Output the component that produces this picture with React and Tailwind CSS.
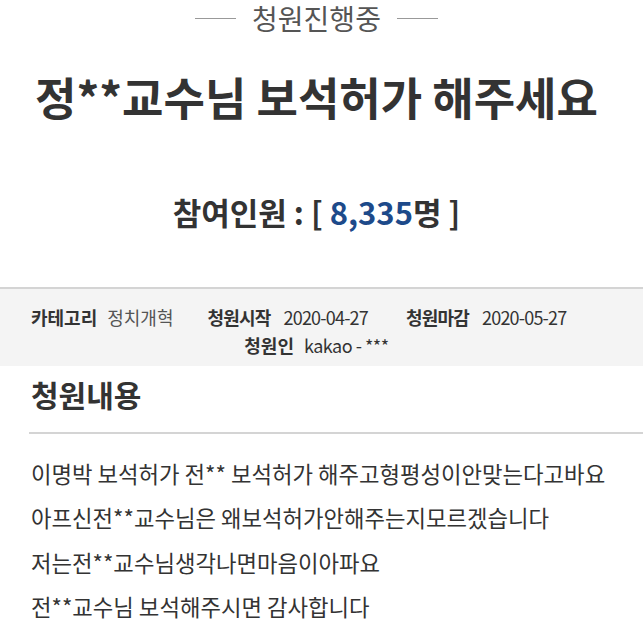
export default function App() {
  const font = { fontFamily: '"Noto Sans CJK KR", "Noto Sans", sans-serif' };
  return (
    <div className="w-[643px] h-[629px] overflow-hidden bg-white text-[#333]" style={font}>
      <div className="w-[633px]">
        <div className="h-[36px] flex items-center justify-center gap-[16px]">
          <span className="block w-[41px] h-px bg-[#999]"></span>
          <span className="text-[28px] leading-[36px] text-[#555]">청원진행중</span>
          <span className="block w-[41px] h-px bg-[#999]"></span>
        </div>
        <h1 className="mt-[34px] text-center text-[45px] leading-[54px] font-bold">
          정**교수님 보석허가 해주세요
        </h1>
        <p className="mt-[68px] text-center text-[31px] leading-[40px] font-bold">
          참여인원 : [ <span className="text-[#1d4a8a]">8,335</span>명 ]
        </p>
      </div>
      <div className="mt-[55px] border-t-2 border-[#d4d4d4] bg-[#f4f4f4] h-[79px] pt-[14px]">
        <div className="w-[633px] text-[18px] leading-[28px]">
          <div className="flex pl-[31px]">
            <span className="mr-[34px]"><b className="mr-[10px]">카테고리</b><span className="text-[#555]">정치개혁</span></span>
            <span className="mr-[38px]"><b className="mr-[13px] tracking-[-0.8px]">청원시작</b><span className="tracking-[-0.8px]">2020-04-27</span></span>
            <span><b className="mr-[13px] tracking-[-0.8px]">청원마감</b><span className="tracking-[-0.8px]">2020-05-27</span></span>
          </div>
          <div className="flex justify-center">
            <span><b className="mr-[10px]">청원인</b><span className="tracking-[-0.5px]">kakao - ***</span></span>
          </div>
        </div>
      </div>
      <div className="pl-[29px]">
        <h2 className="pt-[8px] pl-[2px] text-[30px] leading-[40px] font-bold">청원내용</h2>
        <div className="mt-[18px] h-[2px] bg-[#d4d4d4]"></div>
        <div className="pt-[17px] pl-[2px] text-[22.3px] leading-[44.3px]">
          <p>이명박 보석허가 전** 보석허가 해주고형평성이안맞는다고바요</p>
          <p>아프신전**교수님은 왜보석허가안해주는지모르겠습니다</p>
          <p>저는전**교수님생각나면마음이아파요</p>
          <p>전**교수님 보석해주시면 감사합니다</p>
        </div>
      </div>
    </div>
  );
}
